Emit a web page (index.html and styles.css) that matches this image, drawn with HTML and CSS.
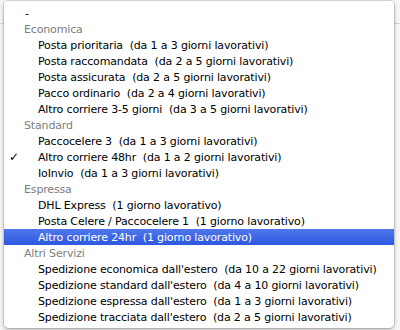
FILE: index.html
```html
<!DOCTYPE html>
<html>
<head>
<meta charset="utf-8">
<link rel="stylesheet" href="styles.css">
</head>
<body>
<div class="page">
  <div class="page-line top"></div>
</div>
<div class="menu">
  <div class="opt plain">-</div>
  <div class="grp">Economica</div>
  <div class="opt">Posta prioritaria  (da 1 a 3 giorni lavorativi)</div>
  <div class="opt">Posta raccomandata  (da 2 a 5 giorni lavorativi)</div>
  <div class="opt">Posta assicurata  (da 2 a 5 giorni lavorativi)</div>
  <div class="opt">Pacco ordinario  (da 2 a 4 giorni lavorativi)</div>
  <div class="opt">Altro corriere 3-5 giorni  (da 3 a 5 giorni lavorativi)</div>
  <div class="grp">Standard</div>
  <div class="opt">Paccocelere 3  (da 1 a 3 giorni lavorativi)</div>
  <div class="opt checked"><span class="check">✓</span>Altro corriere 48hr  (da 1 a 2 giorni lavorativi)</div>
  <div class="opt">IoInvio  (da 1 a 3 giorni lavorativi)</div>
  <div class="grp">Espressa</div>
  <div class="opt">DHL Express  (1 giorno lavorativo)</div>
  <div class="opt">Posta Celere / Paccocelere 1  (1 giorno lavorativo)</div>
  <div class="opt hl">Altro corriere 24hr  (1 giorno lavorativo)</div>
  <div class="grp">Altri Servizi</div>
  <div class="opt">Spedizione economica dall'estero  (da 10 a 22 giorni lavorativi)</div>
  <div class="opt">Spedizione standard dall'estero  (da 4 a 10 giorni lavorativi)</div>
  <div class="opt">Spedizione espressa dall'estero  (da 1 a 3 giorni lavorativi)</div>
  <div class="opt">Spedizione tracciata dall'estero  (da 2 a 5 giorni lavorativi)</div>
</div>
</body>
</html>
```
FILE: styles.css
```css
html, body {
  margin: 0;
  padding: 0;
  background: #ffffff;
  width: 400px;
  height: 330px;
  overflow: hidden;
  font-family: "DejaVu Sans", sans-serif;
}
.page {
  position: relative;
  width: 400px;
  height: 330px;
  background: #f7f7f7;
}
.page-line.top {
  position: absolute;
  left: 0;
  right: 0;
  top: 23px;
  height: 1px;
  background: #d8d8d8;
}
.menu {
  position: absolute;
  left: 4px;
  top: 1px;
  width: 390px;
  height: 327px;
  box-sizing: border-box;
  padding-top: 4px;
  background: rgba(255, 255, 255, 0.97);
  border-radius: 4px 4px 5px 5px;
  box-shadow: 0 0 0 1px rgba(0, 0, 0, 0.12), 0 2px 5px rgba(0, 0, 0, 0.25);
  display: flex;
  flex-direction: column;
}
.opt, .grp {
  height: 16px;
  line-height: 17px;
  font-size: 11px;
  letter-spacing: -0.15px;
  white-space: pre;
  color: #000;
  position: relative;
}
.opt {
  padding-left: 34px;
}
.opt.plain {
  padding-left: 21px;
}
.grp {
  padding-left: 20px;
  color: #7d7d7d;
}
.check {
  position: absolute;
  left: 5px;
  top: 0;
  font-size: 12px;
}
.hl {
  background: linear-gradient(#5077e9, #2e58e1);
  color: #fff;
}
```
